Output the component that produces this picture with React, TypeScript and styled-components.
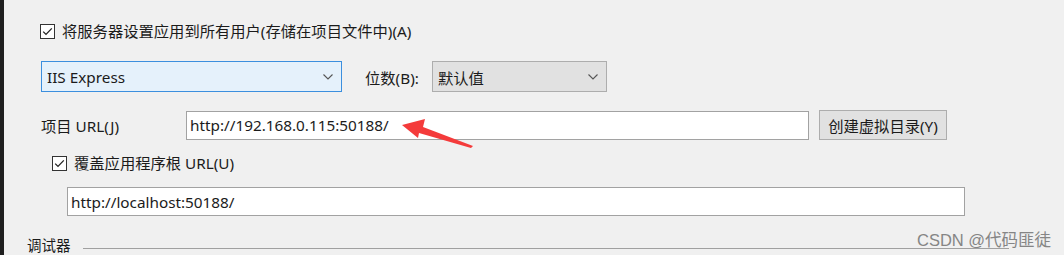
import React from 'react';
import styled, { createGlobalStyle } from 'styled-components';

const GlobalStyle = createGlobalStyle`
  html, body {
    margin: 0;
    padding: 0;
    background: #f0f0f0;
  }
  body {
    font-family: "Noto Sans", "Noto Sans CJK SC", sans-serif;
    color: #1b1b1b;
  }
`;

const Page = styled.div`
  position: relative;
  width: 1064px;
  height: 255px;
  overflow: hidden;
  box-sizing: border-box;
  background: #f0f0f0;
  border-left: 4px solid #1f1f1f;
  display: flex;
  flex-direction: column;
  font-size: 15.3px;
`;

const Row = styled.div<{ $top: number; $left: number }>`
  display: flex;
  align-items: center;
  margin-top: ${(p) => p.$top}px;
  margin-left: ${(p) => p.$left}px;
`;

const CheckBox = styled.span`
  width: 13px;
  height: 13px;
  border: 1px solid #333;
  background: #fff;
  display: flex;
  align-items: center;
  justify-content: center;
  flex-shrink: 0;
`;

const CheckLabel = styled.span`
  margin-left: 7px;
  line-height: 16px;
  white-space: nowrap;
`;

const Select = styled.div<{ $width: number; $active?: boolean }>`
  width: ${(p) => p.$width}px;
  height: 31px;
  box-sizing: border-box;
  display: flex;
  align-items: center;
  justify-content: space-between;
  padding: 0 8px 0 5px;
  border: 1px solid ${(p) => (p.$active ? '#3c8fde' : '#adadad')};
  background: ${(p) => (p.$active ? '#e5f1fb' : '#e1e1e1')};
  white-space: nowrap;
`;

const FieldLabel = styled.span<{ $gap: number }>`
  white-space: nowrap;
  width: ${(p) => p.$gap}px;
  flex-shrink: 0;
`;

const TextBox = styled.div<{ $width: number }>`
  width: ${(p) => p.$width}px;
  height: 29px;
  box-sizing: border-box;
  border: 1px solid #a2a2a2;
  background: #fff;
  display: flex;
  align-items: center;
  padding-left: 3px;
  white-space: nowrap;
`;

const Button = styled.div`
  margin-left: 10px;
  width: 128px;
  height: 30px;
  box-sizing: border-box;
  border: 1px solid #adadad;
  background: #e1e1e1;
  display: flex;
  align-items: center;
  justify-content: center;
  white-space: nowrap;
`;

const GroupRow = styled.div`
  display: flex;
  align-items: flex-start;
  margin-top: 21px;
  margin-left: 23px;
`;

const GroupTitle = styled.span`
  font-size: 14.5px;
  line-height: 16px;
  white-space: nowrap;
`;

const GroupLine = styled.div`
  margin-top: 11px;
  margin-left: 12px;
  width: 926px;
  height: 1px;
  background: #a0a0a0;
`;

const Arrow = styled.svg`
  position: absolute;
  left: 0;
  top: 0;
  pointer-events: none;
`;

const Watermark = styled.div`
  position: absolute;
  left: 913px;
  top: 227px;
  font-size: 16.5px;
  color: #858585;
  white-space: nowrap;
  font-family: "Liberation Sans", "Noto Sans CJK SC", sans-serif;
`;

const Check = () => (
  <CheckBox>
    <svg width="11" height="11" viewBox="0 0 11 11">
      <path d="M1.2 5.6 L4 8.4 L9.8 2.4" fill="none" stroke="#222" strokeWidth="1.3" />
    </svg>
  </CheckBox>
);

const Chevron = () => (
  <svg width="10" height="6" viewBox="0 0 10 6">
    <path d="M0.5 0.5 L5 5 L9.5 0.5" fill="none" stroke="#555" strokeWidth="1.1" />
  </svg>
);

export default function App() {
  return (
    <>
      <GlobalStyle />
      <Page>
        <Row $top={23} $left={36}>
          <Check />
          <CheckLabel>将服务器设置应用到所有用户(存储在项目文件中)(A)</CheckLabel>
        </Row>
        <Row $top={22} $left={37}>
          <Select $width={301} $active>
            <span>IIS Express</span>
            <Chevron />
          </Select>
          <FieldLabel $gap={67} style={{ marginLeft: 23 }}>
            位数(B):
          </FieldLabel>
          <Select $width={175}>
            <span>默认值</span>
            <Chevron />
          </Select>
        </Row>
        <Row $top={18} $left={37}>
          <FieldLabel $gap={145}>项目 URL(J)</FieldLabel>
          <TextBox $width={623}>http://192.168.0.115:50188/</TextBox>
          <Button>创建虚拟目录(Y)</Button>
        </Row>
        <Row $top={15} $left={48}>
          <Check />
          <CheckLabel>覆盖应用程序根 URL(U)</CheckLabel>
        </Row>
        <Row $top={16} $left={63}>
          <TextBox $width={898}>http://localhost:50188/</TextBox>
        </Row>
        <GroupRow>
          <GroupTitle>调试器</GroupTitle>
          <GroupLine />
        </GroupRow>
        <Arrow width="1060" height="255">
          <polygon
            points="398,125 421,119 419,127 469,146 467,148 415,133 414,138"
            fill="#f43b3b"
          />
        </Arrow>
        <Watermark>CSDN @代码匪徒</Watermark>
      </Page>
    </>
  );
}
